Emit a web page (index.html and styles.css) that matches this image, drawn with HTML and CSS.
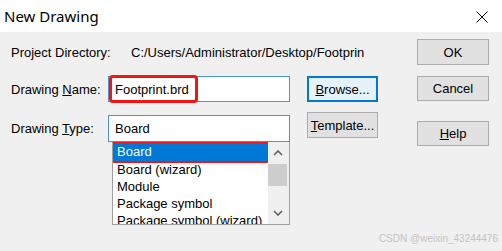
FILE: index.html
```html
<!DOCTYPE html>
<html>
<head>
  <meta charset="UTF-8">
  <title>New Drawing</title>
  <link rel="stylesheet" href="styles.css">
</head>
<body>
  <div class="dialog">
    <div class="titlebar">
      <span class="title">New Drawing</span>
      <svg class="close" width="12" height="12" viewBox="0 0 12 12">
        <path d="M0.5 0.5 L11.5 11.5 M11.5 0.5 L0.5 11.5" stroke="#000" stroke-width="1" fill="none"/>
      </svg>
    </div>

    <div class="client">
      <div class="form">
        <div class="row row-dir">
          <span class="label label-dir">Project Directory:</span>
          <span class="path">C:/Users/Administrator/Desktop/Footprin</span>
        </div>

        <div class="row row-name">
          <span class="label">Drawing <u>N</u>ame:</span>
          <div class="edit">
            <span class="mark">Footprint.brd</span>
          </div>
          <button class="btn btn-side btn-default"><u>B</u>rowse...</button>
        </div>

        <div class="row row-type">
          <span class="label">Drawing <u>T</u>ype:</span>
          <div class="combo">
            <div class="edit edit-type">Board</div>
            <div class="droplist">
              <ul class="items">
                <li class="selected">Board</li>
                <li>Board (wizard)</li>
                <li>Module</li>
                <li>Package symbol</li>
                <li>Package symbol (wizard)</li>
              </ul>
              <div class="scrollbar">
                <div class="arrow">
                  <svg width="10" height="6" viewBox="0 0 10 6"><path d="M1 5 L5 1 L9 5" stroke="#606060" stroke-width="1.6" fill="none"/></svg>
                </div>
                <div class="thumb"></div>
                <div class="track"></div>
                <div class="arrow">
                  <svg width="10" height="6" viewBox="0 0 10 6"><path d="M1 1 L5 5 L9 1" stroke="#606060" stroke-width="1.6" fill="none"/></svg>
                </div>
              </div>
            </div>
          </div>
          <button class="btn btn-side btn-template"><u>T</u>emplate...</button>
        </div>
      </div>

      <div class="actions">
        <button class="btn btn-ok">OK</button>
        <button class="btn btn-cancel">Cancel</button>
        <button class="btn btn-help"><u>H</u>elp</button>
      </div>
    </div>

    <div class="watermark">CSDN @weixin_43244476</div>
  </div>
</body>
</html>
```

FILE: styles.css
```css
html, body {
  margin: 0;
  padding: 0;
}
body {
  width: 502px;
  height: 251px;
  overflow: hidden;
  font-family: "Liberation Sans", Arial, sans-serif;
  font-size: 13px;
  color: #000;
}
.dialog {
  position: relative;
  width: 502px;
  height: 251px;
  background: #f0f0f0;
}
.titlebar {
  height: 32px;
  background: #fff;
  display: flex;
  align-items: center;
  justify-content: space-between;
  padding: 0 14px 0 4px;
  box-sizing: border-box;
}
.title {
  font-family: "Noto Sans", "Open Sans", sans-serif;
  font-size: 15px;
  margin-top: -1px;
}
.close {
  display: block;
  margin-top: 1px;
}
.client {
  display: flex;
  padding: 7px 0 0 11px;
}
.form {
  width: 367px;
}
.row {
  display: flex;
  align-items: center;
}
.row-dir {
  height: 26px;
}
.label {
  width: 97px;
  flex-shrink: 0;
}
.label-dir {
  width: 120px;
}
.path {
  white-space: nowrap;
}
.row-name {
  margin-top: 11px;
  height: 26px;
}
.edit {
  position: relative;
  width: 182px;
  height: 26px;
  box-sizing: border-box;
  border: 1px solid #4a94dc;
  background: #fff;
  display: flex;
  align-items: center;
  padding-left: 6px;
}
.mark {
  position: absolute;
  left: 0;
  top: -2px;
  width: 89px;
  height: 28px;
  box-sizing: border-box;
  border: 3px solid #f41414;
  border-radius: 4px;
  padding-left: 3px;
  display: flex;
  align-items: center;
}
.btn {
  font-family: "Liberation Sans", Arial, sans-serif;
  font-size: 13px;
  color: #000;
  background: #e1e1e1;
  border: 1px solid #adadad;
  padding: 0;
  box-sizing: border-box;
}
.btn-side {
  margin-left: 17px;
  width: 71px;
  height: 26px;
}
.btn-default {
  border-color: #0078d7;
  box-shadow: inset 0 0 0 1px #0078d7;
  background: #e5f1fb;
}
.row-type {
  margin-top: 10px;
  height: 30px;
  align-items: flex-start;
}
.row-type .label {
  margin-top: 9px;
}
.combo {
  position: relative;
  margin-top: 3px;
}
.edit-type {
  height: 27px;
}
.btn-template {
  height: 26px;
}
.droplist {
  position: absolute;
  left: 4px;
  top: 27px;
  width: 178px;
  height: 83px;
  box-sizing: border-box;
  border: 1px solid #a0a0a0;
  border-top: none;
  background: #fff;
  display: flex;
  z-index: 2;
}
.items {
  list-style: none;
  margin: 0;
  padding: 1px 0 0 0;
  flex: 1;
  overflow: hidden;
}
.items li {
  height: 17px;
  line-height: 17px;
  padding-left: 4px;
  white-space: nowrap;
}
.items li.selected {
  position: relative;
  height: 18px;
  line-height: 18px;
  background: #0078d7;
  color: #fff;
  box-shadow: 0 0 0 2px #f41414;
  border-radius: 2px;
}
.scrollbar {
  width: 21px;
  background: #f0f0f0;
  display: flex;
  flex-direction: column;
  padding-right: 2px;
  box-sizing: border-box;
}
.arrow {
  height: 22px;
  display: flex;
  align-items: center;
  justify-content: center;
}
.thumb {
  height: 22px;
  background: #cdcdcd;
}
.track {
  flex: 1;
}
.actions {
  margin-left: 39px;
  display: flex;
  flex-direction: column;
}
.actions .btn {
  width: 72px;
}
.btn-ok {
  height: 26px;
}
.btn-cancel {
  margin-top: 11px;
  height: 25px;
}
.btn-help {
  margin-top: 20px;
  height: 25px;
}
.watermark {
  position: absolute;
  right: 4px;
  bottom: 7px;
  font-size: 10px;
  color: #c4c4c4;
}
```
